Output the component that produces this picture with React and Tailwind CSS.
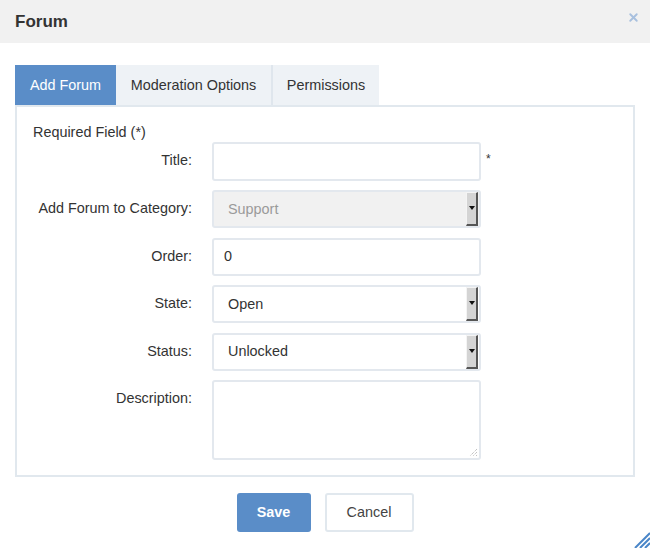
import { X } from 'lucide-react';

function SelectBox({ value, disabled }) {
  return (
    <div
      className={`flex items-center justify-between h-[38px] w-[269px] rounded-[3px] border-2 border-[#e3e8ee] pl-[14px] pr-[1px] ${
        disabled ? 'bg-[#f1f1f1] text-[#9a9a9a]' : 'bg-white text-[#333]'
      }`}
    >
      <span className="pt-[1px]">{value}</span>
      <div className="flex h-[34px] w-[12px] items-center justify-center border-l border-t border-[#f4f4f4] border-r-2 border-b-2 border-r-[#555] border-b-[#555] bg-[#d4d4d4]">
        <svg width="6" height="5" viewBox="0 0 6 5">
          <path d="M0 0 H6 L3 4 Z" fill="#111" />
        </svg>
      </div>
    </div>
  );
}

function Row({ label, children, extra }) {
  return (
    <div className="flex items-start">
      <div className="w-[159px] pt-[8px] text-right">{label}</div>
      <div className="ml-[20px] flex items-start">
        {children}
        {extra}
      </div>
    </div>
  );
}

export default function App() {
  return (
    <div className="relative h-[548px] w-[650px] overflow-hidden bg-white font-['Liberation_Sans',Arial,sans-serif] text-[14.4px] text-[#333]">
      <div className="flex h-[43px] items-center justify-between bg-[#f1f1f1] pl-[15px] pr-[10px]">
        <h1 className="text-[17px] font-bold text-[#333]">Forum</h1>
        <X size={13} strokeWidth={3.5} className="mb-[8px] text-[#a8c0de]" />
      </div>

      <div className="px-[15px] pt-[22px]">
        <div className="flex h-[40px]">
          <div className="flex w-[101px] items-center justify-center bg-[#5a8dc8] pt-[2px] text-white">Add Forum</div>
          <div className="flex w-[157px] items-center justify-center bg-[#eef2f6] border-r-2 border-[#dfe6ed] pt-[2px]">
            Moderation Options
          </div>
          <div className="flex w-[106px] items-center justify-center bg-[#eef2f6] pt-[2px]">Permissions</div>
        </div>

        <div className="h-[372px] border-2 border-[#e1e8ee] px-[16px] pt-[17px]">
          <div className="leading-[17px]">Required Field (*)</div>
          <div className="mt-[1px] flex flex-col gap-[9.4px]">
            <Row label="Title:" extra={<span className="ml-[5px] mt-[8px] text-[12px]">*</span>}>
              <div className="h-[39px] w-[269px] rounded-[3px] border-2 border-[#e3e8ee] bg-white" />
            </Row>
            <Row label="Add Forum to Category:">
              <SelectBox value="Support" disabled />
            </Row>
            <Row label="Order:">
              <div className="flex h-[38px] w-[269px] items-center rounded-[3px] border-2 border-[#e3e8ee] bg-white pl-[10px] pt-[1px]">
                0
              </div>
            </Row>
            <Row label="State:">
              <SelectBox value="Open" />
            </Row>
            <Row label="Status:">
              <SelectBox value="Unlocked" />
            </Row>
            <Row label="Description:">
              <div className="relative h-[80px] w-[269px] rounded-[3px] border-2 border-[#e3e8ee] bg-white">
                <svg className="absolute bottom-[1px] right-[1px]" width="9" height="9" viewBox="0 0 9 9">
                  <path d="M8 1 L1 8 M8 4 L4 8 M8 7 L7 8" stroke="#aaa" strokeWidth="1" strokeDasharray="1 1" />
                </svg>
              </div>
            </Row>
          </div>
        </div>

        <div className="mt-[16px] flex justify-center gap-[14px]">
          <button className="h-[39px] w-[74px] rounded-[3px] bg-[#5a8dc8] font-bold text-white">Save</button>
          <button className="h-[39px] w-[89px] rounded-[3px] border-2 border-[#e1e8ee] bg-white text-[#444]">
            Cancel
          </button>
        </div>
      </div>

      <svg className="absolute bottom-0 right-0" width="18" height="18" viewBox="0 0 18 18">
        <path d="M18 3 L3 18 M18 8 L8 18 M18 13 L13 18" stroke="#4a86c8" strokeWidth="2" />
      </svg>
    </div>
  );
}
